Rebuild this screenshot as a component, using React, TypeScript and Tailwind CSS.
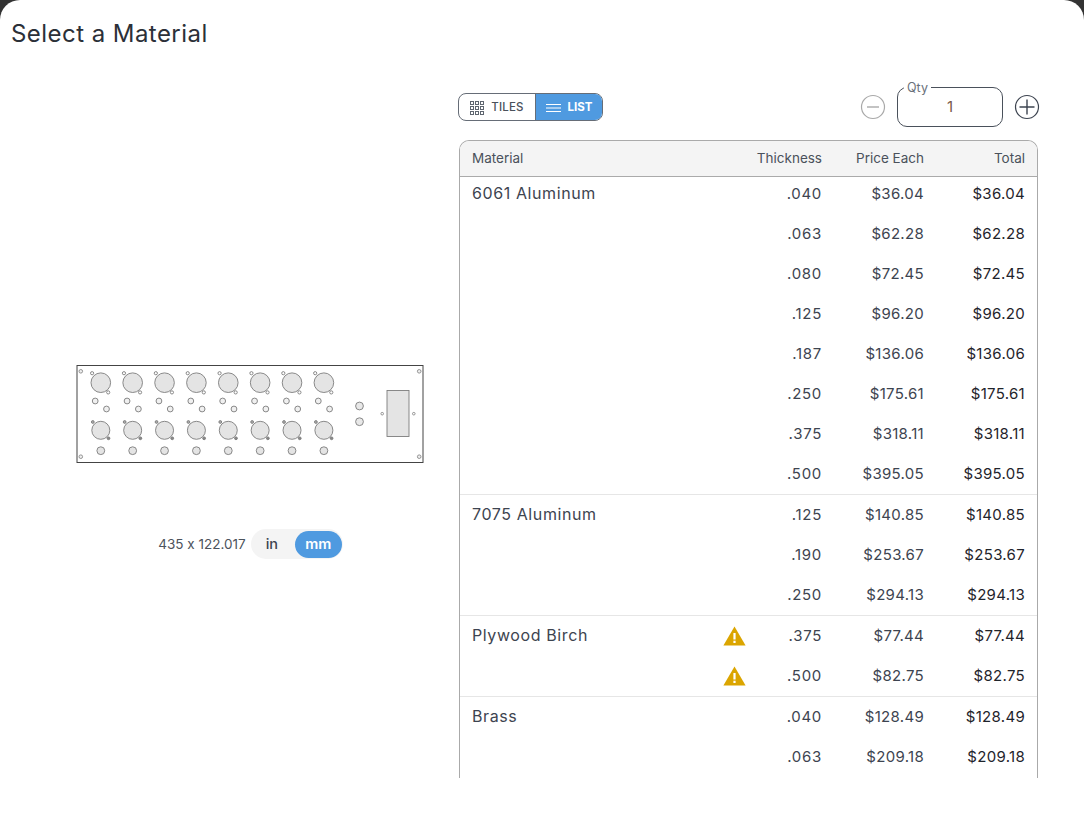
import React from "react";

const FONT = "font-['Inter','Noto_Sans',sans-serif]";

const groups = [
  {
    name: "6061 Aluminum",
    rows: [
      { thickness: ".040", price: "$36.04" },
      { thickness: ".063", price: "$62.28" },
      { thickness: ".080", price: "$72.45" },
      { thickness: ".125", price: "$96.20" },
      { thickness: ".187", price: "$136.06" },
      { thickness: ".250", price: "$175.61" },
      { thickness: ".375", price: "$318.11" },
      { thickness: ".500", price: "$395.05" },
    ],
  },
  {
    name: "7075 Aluminum",
    rows: [
      { thickness: ".125", price: "$140.85" },
      { thickness: ".190", price: "$253.67" },
      { thickness: ".250", price: "$294.13" },
    ],
  },
  {
    name: "Plywood Birch",
    warn: true,
    rows: [
      { thickness: ".375", price: "$77.44" },
      { thickness: ".500", price: "$82.75" },
    ],
  },
  {
    name: "Brass",
    rows: [
      { thickness: ".040", price: "$128.49" },
      { thickness: ".063", price: "$209.18" },
    ],
  },
];

const Panel = () => {
  const stroke = "#7d7d7d";
  const cols = [0, 1, 2, 3, 4, 5, 6, 7].map((i) => i * 31.87);
  return (
    <svg width="348" height="98" viewBox="76.5 365 348 98" className="block shrink-0">
      <rect x="77.5" y="365.5" width="346" height="97" fill="#fff" stroke="#444" strokeWidth="1" />
      {[
        [81.3, 371.3],
        [419.7, 371.3],
        [81.3, 456.7],
        [419.7, 456.7],
      ].map(([cx, cy], i) => (
        <circle key={i} cx={cx} cy={cy} r="1.8" fill="#eee" stroke={stroke} strokeWidth="0.8" />
      ))}
      {cols.map((dx, i) => (
        <g key={i} fill="#e4e4e4" stroke={stroke} strokeWidth="0.9">
          <circle cx={101.3 + dx} cy="382.7" r="9.8" />
          <circle cx={92.6 + dx} cy="373.2" r="1.6" fill="#fff" />
          <circle cx={108.7 + dx} cy="392.4" r="1.6" fill="#fff" />
          <circle cx={95.7 + dx} cy="401" r="2.9" fill="#f0f0f0" />
          <circle cx={107 + dx} cy="409" r="2.9" fill="#f0f0f0" />
          <circle cx={101.3 + dx} cy="430.3" r="9" />
          <circle cx={93.3 + dx} cy="422" r="1.4" fill="#aaa" />
          <circle cx={109 + dx} cy="438.3" r="1.4" fill="#888" />
          <circle cx={101.3 + dx} cy="450.7" r="3.9" />
        </g>
      ))}
      <circle cx="360" cy="406" r="3.9" fill="#e8e8e8" stroke={stroke} strokeWidth="0.9" />
      <circle cx="360" cy="421.7" r="3.9" fill="#e8e8e8" stroke={stroke} strokeWidth="0.9" />
      <rect x="387.5" y="390.5" width="22" height="46" fill="#e4e4e4" stroke={stroke} strokeWidth="0.9" />
      <circle cx="382.7" cy="413.7" r="1.3" fill="#fff" stroke={stroke} strokeWidth="0.8" />
      <circle cx="414.3" cy="413.7" r="1.3" fill="#fff" stroke={stroke} strokeWidth="0.8" />
    </svg>
  );
};

const GridIcon = () => (
  <svg width="14" height="14" viewBox="0 0 14 14" fill="none" stroke="#5f6670" strokeWidth="1">
    {[0, 5, 10].map((y) =>
      [0, 5, 10].map((x) => <rect key={`${x}-${y}`} x={x + 0.5} y={y + 0.5} width="3" height="3" />)
    )}
  </svg>
);

const ListIcon = () => (
  <svg width="15" height="10" viewBox="0 0 15 10" stroke="#fff" strokeWidth="1">
    <path d="M0 1.5h15M0 5h15M0 8.5h15" />
  </svg>
);

const WarnIcon = () => (
  <svg width="23" height="20" viewBox="0 0 23 20">
    <path d="M11.5 0.5 L22.6 19.5 H0.4 Z" fill="#dba500" />
    <rect x="10.4" y="7" width="2.2" height="6.5" fill="#fff" />
    <rect x="10.4" y="14.7" width="2.2" height="2.3" fill="#fff" />
  </svg>
);

const CircleButton = ({ plus }: { plus?: boolean }) => {
  const color = plus ? "#3d4450" : "#a9a9a9";
  return (
    <svg width="26" height="26" viewBox="0 0 26 26" fill="none" stroke={color}>
      <circle cx="13" cy="13" r="11.5" strokeWidth="1.2" />
      <path d={plus ? "M5.5 13h15M13 5.5v15" : "M7 13h12"} strokeWidth="1.4" />
    </svg>
  );
};

export default function App() {
  return (
    <div className={`h-[817px] overflow-hidden bg-[#333] ${FONT}`}>
      <div className="h-full rounded-t-[20px] bg-white pl-[11px] pr-[46px] pt-[19px]">
        <h1 className="text-[24px] leading-[30px] font-normal tracking-[0.45px] text-[#2b3038]">Select a Material</h1>

        <div className="mt-[38px] flex">
          <div className="flex w-[447px] flex-col items-center pl-[40px] pr-[10px] pt-[278px]">
            <Panel />
            <div className="ml-[2px] mt-[66px] flex items-center gap-[5px]">
              {/* calt off, otherwise Inter swaps the x between numbers for a multiplication sign */}
              <span className="text-[13.5px] tracking-normal text-[#4c535c] [font-feature-settings:'calt'_0]">435 x 122.017</span>
              <div className="flex h-[30px] w-[92px] items-center justify-between rounded-full bg-[#f4f4f4] pl-[15px] pr-[1px]">
                <span className="text-[14.5px] font-medium text-[#3d4450]">in</span>
                <span className="flex h-[27px] w-[47px] items-center justify-center rounded-full bg-[#4f9ae0] text-[14.5px] font-semibold text-white">
                  mm
                </span>
              </div>
            </div>
          </div>

          <div className="w-[580px]">
            <div className="flex h-[40px] items-center justify-between">
              <div className="flex h-[28px] w-[145px] overflow-hidden rounded-[8px] border border-[#666d77] text-[11.5px] font-medium">
                <div className="flex w-[76px] items-center justify-center gap-[7px] pt-[1px] tracking-[0.2px] text-[#4a515b]">
                  <GridIcon />
                  TILES
                </div>
                <div className="flex flex-1 items-center justify-center gap-[7px] border-l border-[#666d77] bg-[#4f9ae0] pt-[1px] font-bold text-white">
                  <ListIcon />
                  LIST
                </div>
              </div>

              <div className="-mr-[2px] flex items-center gap-[11px]">
                <CircleButton />
                <div className="relative flex h-[40px] w-[106px] items-center justify-center rounded-[10px] border border-[#4a515b] text-[15px] text-[#7a5a48]">
                  <span className="absolute -top-[7px] left-[6px] bg-white px-[3px] text-[12.5px] leading-[14px] text-[#6a717b]">Qty</span>
                  1
                </div>
                <CircleButton plus />
              </div>
            </div>

            <div className="ml-[1px] mt-[13px] h-[638px] overflow-hidden rounded-t-[10px] border-x border-t border-[#aaa] text-[15px] tracking-[0.3px] text-[#3d4450]">
              <div className="flex h-[36px] items-center border-b border-[#aaa] bg-[#f4f4f4] px-[12px] text-[13.5px] tracking-normal text-[#4a515b]">
                <div className="flex-1">Material</div>
                <div className="w-[100px] text-right">Thickness</div>
                <div className="w-[102px] text-right">Price Each</div>
                <div className="w-[101px] text-right">Total</div>
              </div>
              {groups.map((g, gi) => (
                <div key={g.name} className={gi > 0 ? "border-t border-[#e6e6e6]" : ""}>
                  {g.rows.map((r, ri) => (
                    <div
                      key={r.thickness}
                      className={`flex items-center px-[12px] ${gi === 0 && ri === 0 ? "h-[37px] pb-[3px]" : "h-[40px]"}`}
                    >
                      <div className="flex-1 pb-[2px] text-[16px] font-normal tracking-[0.6px] text-[#3d4450]">{ri === 0 ? g.name : ""}</div>
                      <div className="flex w-[100px] items-center justify-between">
                        <span className="ml-[1px] flex w-[23px]">{g.warn && <WarnIcon />}</span>
                        <span className="tracking-[0.7px]">{r.thickness}</span>
                      </div>
                      <div className="w-[102px] text-right">{r.price}</div>
                      <div className="w-[101px] text-right text-[#1f242b]">{r.price}</div>
                    </div>
                  ))}
                </div>
              ))}
            </div>
          </div>
        </div>
      </div>
    </div>
  );
}
